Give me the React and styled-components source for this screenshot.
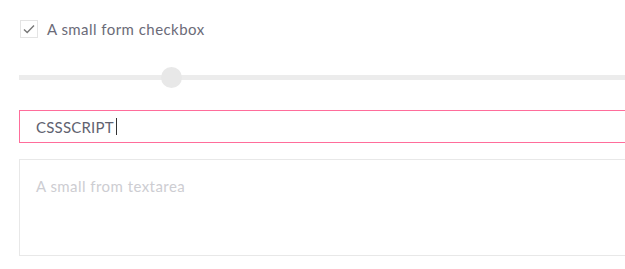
import styled, { createGlobalStyle } from "styled-components";

const GlobalStyle = createGlobalStyle`
  html, body {
    margin: 0;
    padding: 0;
    background: #fff;
    overflow: hidden;
  }
  body {
    font-family: "Lato", "Open Sans", sans-serif;
    color: #666;
  }
`;

const Form = styled.form`
  display: flex;
  flex-direction: column;
  width: 650px;
  padding: 20px 0 0 19px;
  letter-spacing: 0.45px;
`;

const CheckRow = styled.label`
  display: flex;
  align-items: center;
  gap: 9px;
  height: 18px;
  margin-left: 1px;
  font-size: 15px;
  color: #6b6b78;
`;

const Box = styled.span`
  display: flex;
  align-items: center;
  justify-content: center;
  width: 16px;
  height: 16px;
  border: 1px solid #e4e4e4;
`;

const Slider = styled.div`
  position: relative;
  height: 21px;
  margin-top: 29px;
  display: flex;
  align-items: center;
`;

const Track = styled.div`
  width: 100%;
  height: 5px;
  background: #ececec;
`;

const Thumb = styled.span`
  position: absolute;
  top: 0;
  width: 21px;
  height: 21px;
  border-radius: 50%;
  background: #e8e8e8;
`;

const Field = styled.div`
  display: flex;
  align-items: center;
  height: 31px;
  margin-top: 22px;
  padding: 0 16px;
  border: 1px solid #ff6d9b;
  font-size: 15px;
  color: #5f6270;
  letter-spacing: 0.2px;
`;

const Caret = styled.span`
  display: inline-block;
  width: 1px;
  height: 17px;
  margin-left: 2px;
  background: #333;
`;

const TextArea = styled.textarea`
  display: block;
  box-sizing: border-box;
  height: 97px;
  margin-top: 16px;
  padding: 17px 16px;
  border: 1px solid #e8e8e8;
  font-family: inherit;
  font-size: 15px;
  letter-spacing: 0.45px;
  resize: none;
  outline: none;
  &::placeholder {
    color: #cdcdd2;
  }
`;

export default function App() {
  const value = 0.2308;
  return (
    <>
      <GlobalStyle />
      <Form>
        <CheckRow>
          <Box>
            <svg width="12" height="10" viewBox="0 0 12 10">
              <path d="M1 5.5 L4.2 8.5 L11 1.5" fill="none" stroke="#777" strokeWidth="1.4" />
            </svg>
          </Box>
          A small form checkbox
        </CheckRow>
        <Slider>
          <Track />
          <Thumb style={{ left: `${value * 650 - 8}px` }} />
        </Slider>
        <Field>
          CSSSCRIPT
          <Caret />
        </Field>
        <TextArea placeholder="A small from textarea" />
      </Form>
    </>
  );
}
